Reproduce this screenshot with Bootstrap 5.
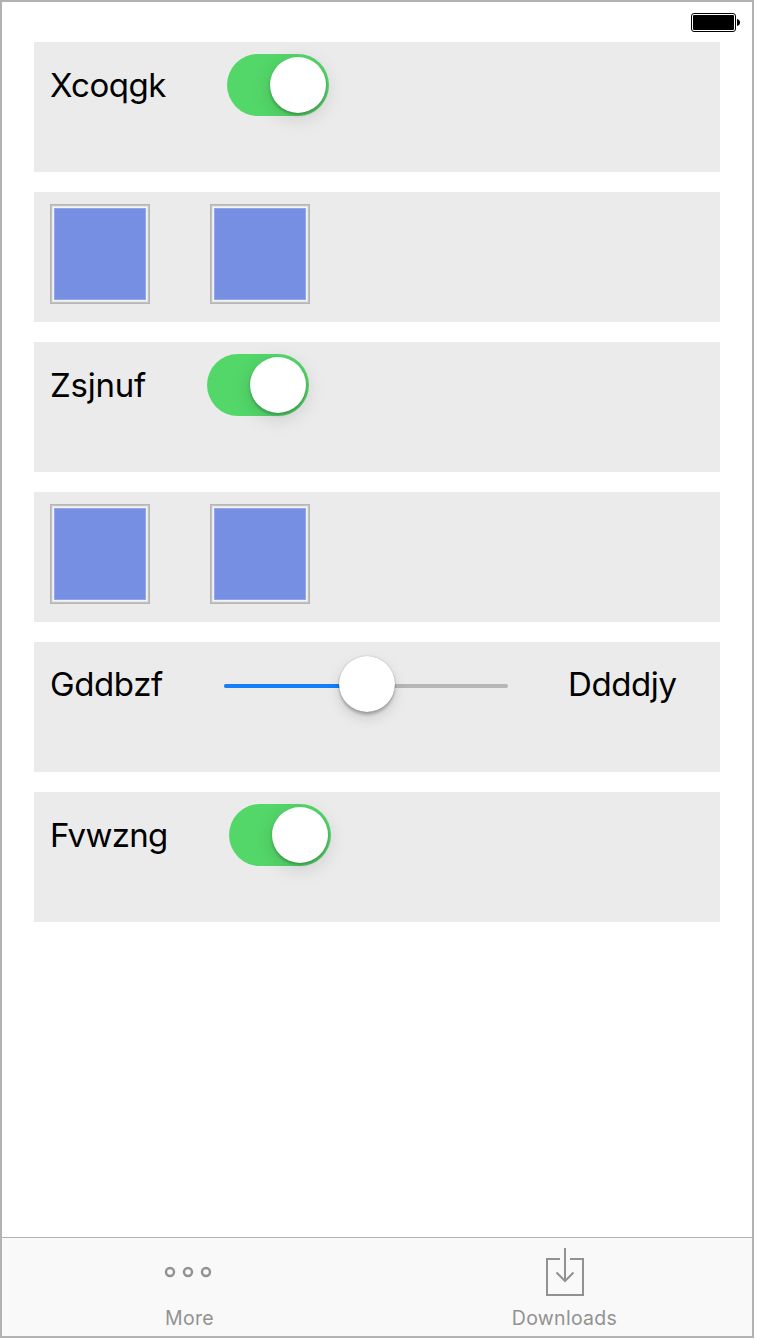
<!DOCTYPE html>
<html lang="en">
<head>
<meta charset="utf-8">
<meta name="viewport" content="width=device-width, initial-scale=1">
<title>Settings</title>
<link href="https://cdn.jsdelivr.net/npm/bootstrap@5.3.0/dist/css/bootstrap.min.css" rel="stylesheet">
<style>
  body { font-family: Inter, "Liberation Sans", sans-serif; color: #000; }
  .phone { width: 754px; height: 1338px; border: 2px solid #b2b2b2; }
  .status { height: 40px; padding: 11px 12px 0 0; }
  .rows { gap: 20px; padding: 0 32px; }
  .panel { height: 130px; background: #ebebeb; padding: 12px 16px; gap: 60px; }
  .caption { font-size: 33px; line-height: 62px; letter-spacing: -.5px; white-space: nowrap; flex: none; }
  .caption-slider { line-height: 60px; letter-spacing: -.4px; }
  .caption-tight { letter-spacing: -.75px; }
  .caption-loose { letter-spacing: -.25px; }
  .toggle { width: 102px; height: 62px; border-radius: 31px; padding: 3px; background: #53d769; flex: none; }
  .knob { width: 56px; height: 56px; border-radius: 50%; background: #fff; }
  .toggle .knob { box-shadow: 0 2px 3px rgba(0,0,0,.26), 0 5px 20px rgba(0,0,0,.14); }
  .swatch { width: 100px; height: 100px; border: 1px solid #b5b5b5; padding: 2px; background: #e6e6e6; box-shadow: inset 0 0 0 1px #c3c3c3; }
  .swatch-fill { width: 94px; height: 94px; border: 1px solid #f5f6fd; background: #768fe2; box-shadow: inset 0 0 0 1px #91a5ea; }
  .slider { width: 284px; height: 4px; margin-top: 30px; border-radius: 2px; background: #b6b6b6; flex: none; }
  .slider-on { width: 143px; height: 4px; border-radius: 2px 0 0 2px; background: #147efb; }
  .slider .knob { left: 115px; top: -28px; box-shadow: 0 0 1px rgba(0,0,0,.4), 0 3px 3px rgba(0,0,0,.22), 0 6px 14px rgba(0,0,0,.13); }
  .tabs { height: 99px; border-top: 1px solid #b2b2b2; background: #f9f9f9; color: #929292; }
  .tab { gap: 7px; padding-top: 9px; }
  .tab-label { font-size: 19.5px; line-height: 28px; letter-spacing: .3px; }
</style>
</head>
<body class="bg-white">
<div class="phone d-flex flex-column bg-white">
  <div class="status d-flex justify-content-end flex-shrink-0">
    <svg width="50" height="20" viewBox="0 0 50 20">
      <rect x="1.5" y=".5" width="44" height="18" rx="2.5" fill="#fff" stroke="#000"/>
      <rect x="3" y="2" width="41" height="15" rx="1"/>
      <path d="M47 6c2 .3 3 1.700 3 3.500s-1 3.200-3 3.500z"/>
    </svg>
  </div>

  <main class="rows d-flex flex-column">
    <section class="panel d-flex align-items-start">
      <div class="caption" style="width:117px">Xcoqgk</div>
      <div class="toggle d-flex justify-content-end"><div class="knob"></div></div>
    </section>
    <section class="panel d-flex align-items-start">
      <div class="swatch"><div class="swatch-fill"></div></div>
      <div class="swatch"><div class="swatch-fill"></div></div>
    </section>
    <section class="panel d-flex align-items-start">
      <div class="caption caption-loose" style="width:97px">Zsjnuf</div>
      <div class="toggle d-flex justify-content-end"><div class="knob"></div></div>
    </section>
    <section class="panel d-flex align-items-start">
      <div class="swatch"><div class="swatch-fill"></div></div>
      <div class="swatch"><div class="swatch-fill"></div></div>
    </section>
    <section class="panel d-flex align-items-start">
      <div class="caption caption-slider" style="width:114px">Gddbzf</div>
      <div class="slider position-relative"><div class="slider-on"></div><div class="knob position-absolute"></div></div>
      <div class="caption caption-slider">Ddddjy</div>
    </section>
    <section class="panel d-flex align-items-start">
      <div class="caption caption-tight" style="width:119px">Fvwzng</div>
      <div class="toggle d-flex justify-content-end"><div class="knob"></div></div>
    </section>
  </main>

  <nav class="tabs d-flex mt-auto">
    <div class="tab d-flex flex-column align-items-center flex-fill w-50">
      <svg width="51" height="50" viewBox="0 0 51 50" fill="none" stroke="#929292" stroke-width="2.4">
        <circle cx="6" cy="25" r="4"/><circle cx="24" cy="25" r="4"/><circle cx="42" cy="25" r="4"/>
      </svg>
      <div class="tab-label">More</div>
    </div>
    <div class="tab d-flex flex-column align-items-center flex-fill w-50">
      <svg width="40" height="50" viewBox="0 0 40 50" fill="none" stroke="#929292" stroke-width="2">
        <path d="M15 12H2v36h36V12H25M20 1v33M11.500 25.500l8.500 8.500 8.500-8.500"/>
      </svg>
      <div class="tab-label">Downloads</div>
    </div>
  </nav>
</div>
<script src="https://cdn.jsdelivr.net/npm/bootstrap@5.3.0/dist/js/bootstrap.bundle.min.js"></script>
</body>
</html>
